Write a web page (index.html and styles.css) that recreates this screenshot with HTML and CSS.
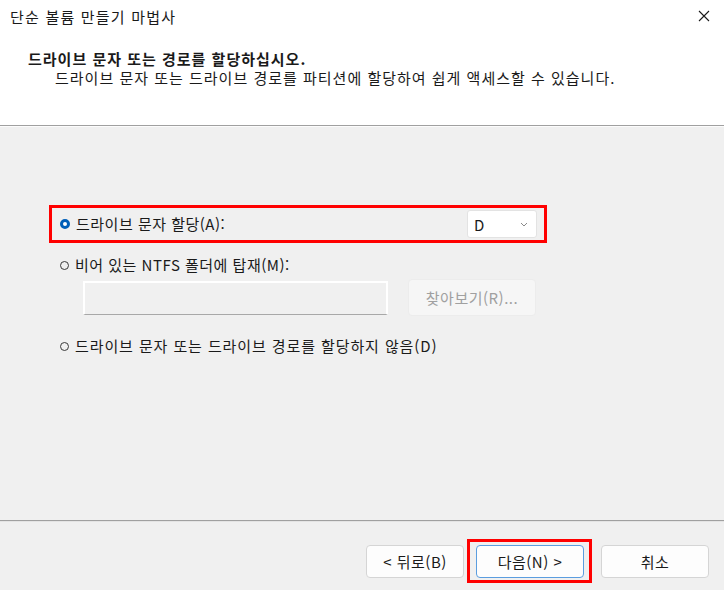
FILE: index.html
```html
<!DOCTYPE html>
<html lang="ko">
  <head>
    <meta charset="utf-8" />
    <title>단순 볼륨 만들기 마법사</title>
    <link rel="stylesheet" href="styles.css">
  </head>
  <body>
    <div class="window">
      <div class="titlebar">
        <span class="title">단순 볼륨 만들기 마법사</span>
        <svg class="close" width="12" height="12" viewBox="0 0 12 12">
          <path d="M1 1 L11 11 M11 1 L1 11" stroke="#1a1a1a" stroke-width="1.1" fill="none" />
        </svg>
      </div>
      <div class="header">
        <div class="heading">드라이브 문자 또는 경로를 할당하십시오.</div>
        <div class="subtitle">드라이브 문자 또는 드라이브 경로를 파티션에 할당하여 쉽게 액세스할 수 있습니다.</div>
      </div>
      <div class="content">
        <div class="option-box">
          <label class="option">
            <span class="radio checked"></span>
            <span class="narrow">드라이브 문자 할당(A):</span>
          </label>
          <div class="select">
            <span>D</span>
            <svg width="8" height="5" viewBox="0 0 8 5">
              <path d="M1 1 L4 4 L7 1" stroke="#8a8a8a" stroke-width="1" fill="none" />
            </svg>
          </div>
        </div>
        <label class="option plain">
          <span class="radio"></span>
          <span class="narrow">비어 있는 NTFS 폴더에 탑재(M):</span>
        </label>
        <div class="folder-row">
          <div class="textbox"></div>
          <button class="browse" type="button" disabled>찾아보기(R)...</button>
        </div>
        <label class="option plain last">
          <span class="radio"></span>
          <span>드라이브 문자 또는 드라이브 경로를 할당하지 않음(D)</span>
        </label>
      </div>
      <div class="footer">
        <button class="btn back" type="button">&lt; 뒤로(B)</button>
        <div class="mark">
          <button class="btn next" type="button">다음(N) &gt;</button>
        </div>
        <button class="btn cancel" type="button">취소</button>
      </div>
    </div>
  </body>
</html>
```

FILE: styles.css
```css
body {
  margin: 0;
  font-family: "Noto Sans CJK KR", "Noto Sans", sans-serif;
  color: #1a1a1a;
}

.window {
  width: 724px;
  height: 590px;
  display: flex;
  flex-direction: column;
  background: #f0f0f0;
}

.titlebar {
  height: 32px;
  display: flex;
  align-items: center;
  justify-content: space-between;
  padding: 0 14px 0 10px;
  background: #fff;
}

.title {
  font-size: 15px;
  letter-spacing: 1.2px;
}

.header {
  height: 94px;
  padding-top: 17px;
  box-sizing: border-box;
  background: #fff;
  border-bottom: 1px solid #a0a0a0;
  font-size: 15px;
  line-height: 19px;
  letter-spacing: 1px;
}

.heading {
  font-weight: bold;
  padding-left: 28px;
}

.subtitle {
  padding-left: 55px;
}

.content {
  flex: 1;
  border-top: 1px solid #fcfcfc;
  border-bottom: 1px solid #a0a0a0;
  padding: 78px 0 0 49px;
  font-size: 15px;
  letter-spacing: 0.9px;
}

.narrow {
  letter-spacing: 0.5px;
}

.option-box {
  width: 498px;
  height: 38px;
  box-sizing: border-box;
  border: 3px solid #ff0000;
  display: flex;
  align-items: center;
  justify-content: space-between;
  padding: 0 7px 0 8px;
}

.option {
  display: flex;
  align-items: center;
  gap: 6px;
  line-height: 20px;
}

.option.plain {
  margin-top: 12px;
  padding-left: 11px;
}

.option.last {
  margin-top: 20px;
}

.radio {
  width: 9px;
  height: 9px;
  box-sizing: border-box;
  border: 1px solid #3a3a3a;
  border-radius: 50%;
}

.radio.checked {
  width: 10px;
  height: 10px;
  border: 3px solid #005fb8;
  background: #fff;
}

.select {
  width: 70px;
  height: 28px;
  box-sizing: border-box;
  background: #fff;
  border: 1px solid #e3e3e3;
  border-radius: 3px;
  display: flex;
  align-items: center;
  justify-content: space-between;
  padding: 0 8px 0 6px;
}

.folder-row {
  display: flex;
  align-items: center;
  gap: 20px;
  margin-top: 4px;
  padding-left: 34px;
}

.textbox {
  width: 305px;
  height: 34px;
  box-sizing: border-box;
  border: 2px solid #fff;
  border-bottom: 1px solid #a8a8a8;
  background: #f0f0f0;
}

.browse {
  width: 128px;
  height: 37px;
  border: 1px solid #ececec;
  border-radius: 4px;
  background: #f6f6f6;
  color: #a0a0a0;
  font-family: inherit;
  font-size: 15px;
  letter-spacing: 0.5px;
}

.footer {
  height: 69px;
  border-top: 1px solid #e4e4e4;
  box-sizing: border-box;
  display: flex;
  justify-content: flex-end;
  align-items: flex-start;
  padding: 17px 15px 0 0;
}

.btn {
  height: 33px;
  margin-top: 6px;
  background: #fdfdfd;
  border: 1px solid #d5d5d5;
  border-radius: 4px;
  font-family: inherit;
  font-size: 15px;
  letter-spacing: 0.5px;
  color: #1a1a1a;
}

.back {
  width: 98px;
  margin-right: 3px;
}

.mark {
  border: 3px solid #ff0000;
  padding: 3px 5px 2px 6px;
  margin-right: 9px;
}

.next {
  width: 108px;
  margin-top: 0;
  border-color: #5b9ddf;
}

.cancel {
  width: 108px;
}
```
